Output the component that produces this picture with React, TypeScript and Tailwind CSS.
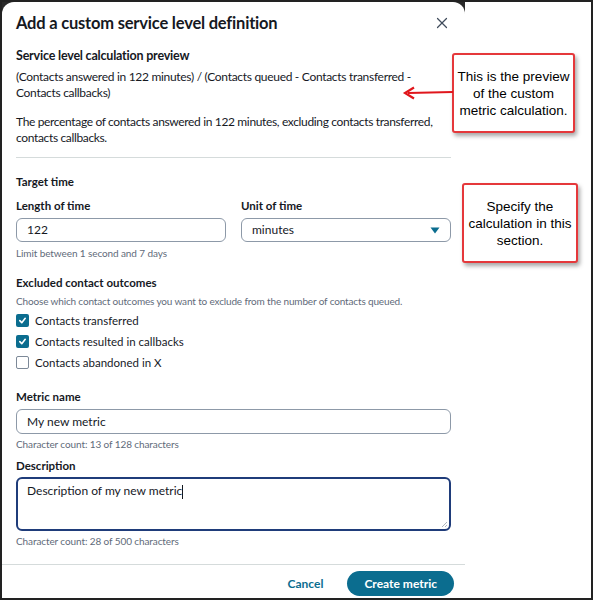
import React from "react";
import { X } from "lucide-react";

const font = { fontFamily: 'Lato, "Open Sans", sans-serif' };

const Check: React.FC<{ checked: boolean; label: string }> = ({ checked, label }) => (
  <label className="flex items-center gap-[6px] h-[21px] text-[11.5px] text-[#16191f]">
    {checked ? (
      <span className="w-[13px] h-[13px] rounded-[2px] bg-[#0b6d8f] flex items-center justify-center">
        <svg width="9" height="9" viewBox="0 0 10 10">
          <path d="M2 5.2 L4.2 7.4 L8 2.6" fill="none" stroke="white" strokeWidth="1.8" strokeLinecap="round" strokeLinejoin="round" />
        </svg>
      </span>
    ) : (
      <span className="w-[13px] h-[13px] rounded-[2px] border border-[#7d8998] bg-white" />
    )}
    {label}
  </label>
);

const Callout: React.FC<{ className: string; lines: string[] }> = ({ className, lines }) => (
  <div
    className={`absolute bg-white border-2 border-[#e5383b] rounded-[3px] shadow-[2px_3px_4px_rgba(0,0,0,0.35)] flex flex-col items-center justify-center text-[13.5px] leading-[17px] text-black ${className}`}
    style={{ fontFamily: '"Liberation Sans", Arial, sans-serif' }}
  >
    {lines.map((l) => (
      <span key={l}>{l}</span>
    ))}
  </div>
);

const App: React.FC = () => {
  return (
    <div className="relative w-[593px] h-[600px] border-2 border-[#222] bg-white flex overflow-hidden" style={font}>
      <div className="w-[463px] h-full bg-[#2a2a2a]">
        <div className="h-full bg-white rounded-t-[12px] flex flex-col text-[#16191f]">
          <div className="flex items-center justify-between pl-[14px] pr-[14px] pt-[9px]">
            <h1 className="text-[16.5px] font-bold leading-[24px] tracking-[-0.2px]">Add a custom service level definition</h1>
            <X className="w-[18px] h-[18px] text-[#414d5c]" strokeWidth={1.6} />
          </div>

          <div className="px-[14px] pt-[12px]">
            <div className="text-[12.5px] font-bold leading-[18px] tracking-[-0.2px]">Service level calculation preview</div>
            <p className="text-[12px] leading-[16px] mt-[4px] tracking-[-0.3px]">
              (Contacts answered in 122 minutes) / (Contacts queued - Contacts transferred - Contacts callbacks)
            </p>
            <p className="text-[12px] leading-[16px] mt-[13px] tracking-[-0.35px]">
              The percentage of contacts answered in 122 minutes, excluding contacts transferred, contacts callbacks.
            </p>
            <div className="h-px bg-[#d5dbdb] mt-[11px]" />

            <div className="text-[11.5px] font-bold leading-[16px] mt-[16px]">Target time</div>
            <div className="grid grid-cols-2 gap-[15px] mt-[8px]">
              <div>
                <div className="text-[11.5px] font-bold leading-[16px]">Length of time</div>
                <div className="mt-[4px] h-[24px] border border-[#8d99a8] rounded-[6px] px-[10px] flex items-center text-[12px]">
                  122
                </div>
              </div>
              <div>
                <div className="text-[11.5px] font-bold leading-[16px]">Unit of time</div>
                <div className="mt-[4px] h-[24px] border border-[#8d99a8] rounded-[6px] px-[10px] flex items-center justify-between text-[12px]">
                  minutes
                  <svg width="10" height="7" viewBox="0 0 10 7">
                    <path d="M0.5 0.5 H9.5 L5 6.5 Z" fill="#0b6d8f" />
                  </svg>
                </div>
              </div>
            </div>
            <div className="text-[10px] text-[#5f6b7a] leading-[14px] mt-[4px] tracking-[-0.1px]">Limit between 1 second and 7 days</div>

            <div className="text-[11.5px] font-bold leading-[16px] mt-[15px]">Excluded contact outcomes</div>
            <div className="text-[10px] text-[#5f6b7a] leading-[14px] mt-[3px] tracking-[-0.15px]">
              Choose which contact outcomes you want to exclude from the number of contacts queued.
            </div>
            <div className="flex flex-col mt-[2px]">
              <Check checked label="Contacts transferred" />
              <Check checked label="Contacts resulted in callbacks" />
              <Check checked={false} label="Contacts abandoned in X" />
            </div>

            <div className="text-[11.5px] font-bold leading-[16px] mt-[16px]">Metric name</div>
            <div className="mt-[4px] h-[25px] border border-[#8d99a8] rounded-[6px] px-[10px] flex items-center text-[12px]">
              My new metric
            </div>
            <div className="text-[10px] text-[#5f6b7a] leading-[14px] mt-[3px] tracking-[-0.1px]">Character count: 13 of 128 characters</div>

            <div className="text-[11.5px] font-bold leading-[16px] mt-[7px]">Description</div>
            <div className="relative mt-[3px] h-[54px] border-2 border-[#1f3c7a] rounded-[6px] px-[9px] pt-[4px] text-[12px] leading-[16px]">
              Description of my new metric<span className="inline-block w-px h-[14px] bg-[#16191f] align-middle" />
              <svg className="absolute right-[1px] bottom-[1px]" width="7" height="7" viewBox="0 0 7 7">
                <path d="M6 1 L1 6 M6 4 L4 6" stroke="#9aa3ad" strokeWidth="0.8" />
              </svg>
            </div>
            <div className="text-[10px] text-[#5f6b7a] leading-[14px] mt-[3px] tracking-[-0.1px]">Character count: 28 of 500 characters</div>
          </div>

          <div className="h-px bg-[#d5dbdb] mt-[16px]" />
          <div className="flex items-center justify-end gap-[24px] px-[11px] pt-[6px]">
            <span className="text-[12px] font-bold text-[#0b6d8f]">Cancel</span>
            <span className="h-[25px] px-[17px] rounded-full bg-[#0b6d8f] text-white text-[12px] font-bold flex items-center">
              Create metric
            </span>
          </div>
        </div>
      </div>
      <div className="flex-1 bg-white" />

      <Callout className="left-[450px] top-[51px] w-[123px] h-[80px]" lines={["This is the preview", "of the custom", "metric calculation."]} />
      <Callout className="left-[460px] top-[181px] w-[116px] h-[80px]" lines={["Specify the", "calculation in this", "section."]} />

      <svg className="absolute left-[400px] top-[84px]" width="52" height="14" viewBox="0 0 52 14">
        <path d="M51 6 L6 7" stroke="#e0161c" strokeWidth="2.2" />
        <path d="M12 1.5 L3 7 L12 12.5" fill="none" stroke="#e0161c" strokeWidth="2.2" strokeLinejoin="miter" />
      </svg>
    </div>
  );
};

export default App;
